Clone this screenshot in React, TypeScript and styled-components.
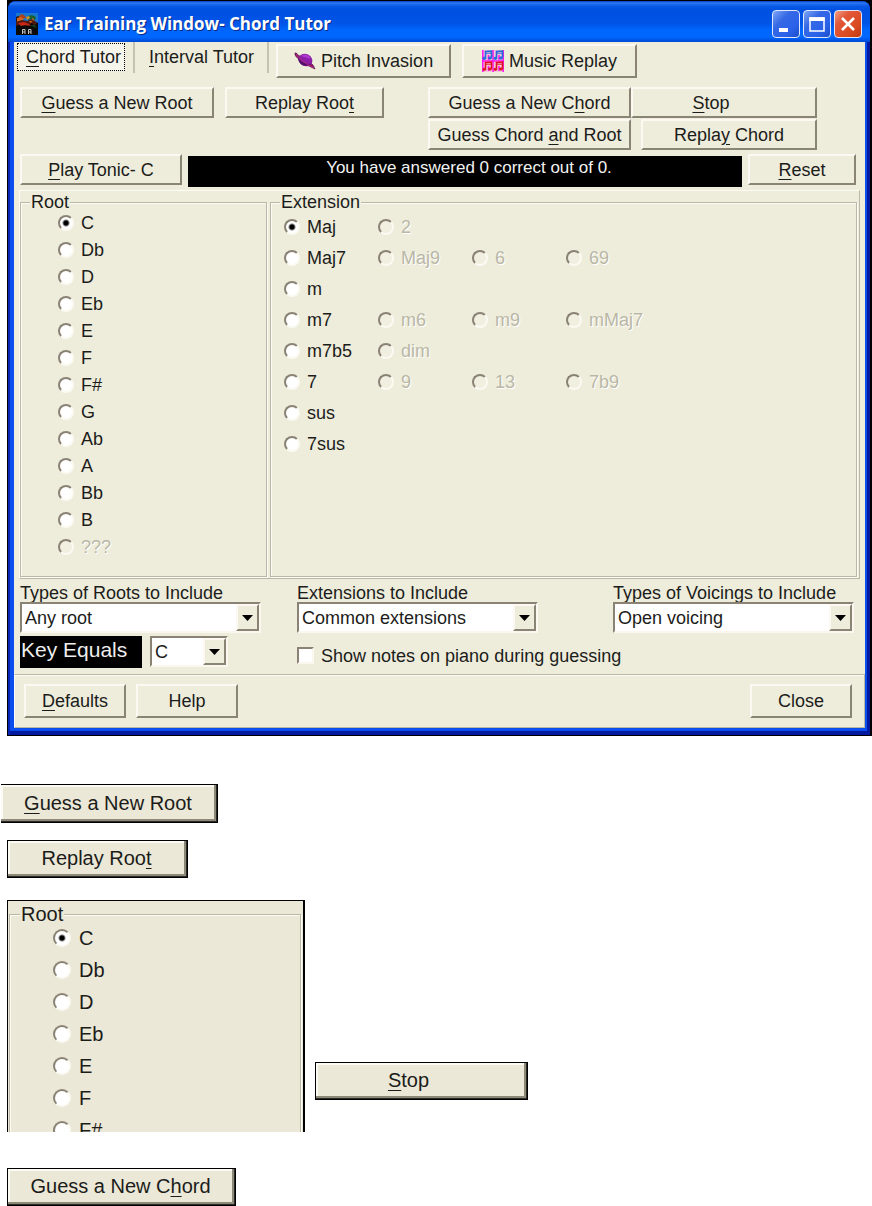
import React from 'react';
import styled, { createGlobalStyle, css } from 'styled-components';

const GlobalStyle = createGlobalStyle`
  *, *::before, *::after { box-sizing: border-box; }
  body {
    margin: 0;
    background: #fff;
    color: #1c1c1a;
    font-family: 'Liberation Sans', Arial, sans-serif;
    font-size: 18px;
    line-height: 20px;
  }
  button, select, input { font: inherit; color: inherit; margin: 0; }
  u { text-decoration-thickness: 1px; text-underline-offset: 3px; }
`;

const Page = styled.main`
  min-width: 860px;
`;

const Frame = styled.section`
  margin-left: 7px;
  padding: 1px 2px 1px 1px;
  background: #000;
`;

const FrameInner = styled.div`
  padding: 0 5px 7px 6px;
  border-radius: 8px 8px 0 0;
  background: #0a4fee;
  box-shadow: inset 2px 0 #0a26b4, inset -3px 0 #0219a0, inset 0 -4px #0219a0;
`;

const TitleBar = styled.header`
  display: flex;
  align-items: center;
  gap: 3px;
  height: 41px;
  margin: 0 -5px 0 -6px;
  padding: 4px 8px 0 8px;
  border-radius: 8px 8px 0 0;
  background: linear-gradient(#0a3fc4 0, #2a78f4 2px, #0a5ae6 5px, #0050e2 9px, #0054e6 22px, #0066fc 29px, #0068ff 36px, #0048d4 41px);
`;

const Title = styled.h1`
  flex: 1;
  margin: 0 0 0 3px;
  color: #fff;
  font: 700 17px/24px 'Open Sans', 'Noto Sans', sans-serif;
  text-shadow: 1px 1px #0a2a86;
  white-space: nowrap;
`;

const CaptionButton = styled.button<{ $close?: boolean }>`
  display: grid;
  place-items: center;
  width: 28px;
  height: 28px;
  padding: 0;
  border: 1px solid #dfe8fb;
  border-radius: 4px;
  background: ${(p) =>
    p.$close
      ? 'linear-gradient(135deg, #f0a088 0, #e2583a 30%, #da4a20 70%, #c03a10 100%)'
      : 'linear-gradient(135deg, #7fa6f6 0, #3568e4 35%, #2a62ea 70%, #1c4ec8 100%)'};
`;

const Client = styled.div`
  background: #eeeddc;
`;

const raised = css`
  border: 2px solid;
  border-color: #fdf9f2 #8a8475 #8a8475 #fdf9f2;
  background: #eeeddc;
`;

const Button = styled.button<{ $w: number; $h?: number; $shift?: boolean }>`
  ${raised}
  display: flex;
  align-items: center;
  justify-content: center;
  gap: 5px;
  width: ${(p) => p.$w}px;
  height: ${(p) => p.$h ?? 31}px;
  padding: 0 ${(p) => (p.$shift ? 26 : 0)}px 0 0;
  white-space: nowrap;
`;

const TabRow = styled.nav`
  display: flex;
  align-items: flex-start;
  height: 36px;
`;

const Tab = styled.button<{ $active?: boolean }>`
  height: 31px;
  padding: 0 13px 1px 14px;
  border: 0;
  border-right: 2px solid #c4c2b0;
  background: transparent;
  white-space: nowrap;
  ${(p) =>
    p.$active &&
    css`
      padding: 1px 8px 2px 3px;
      > span {
        display: block;
        height: 28px;
        padding: 0 3px 0 8px;
        line-height: 26px;
        border: 1px dotted #000;
        background: #f6f5ec;
      }
    `}
`;

const ToolButtons = styled.div`
  display: flex;
  gap: 11px;
  padding: 2px 0 0 7px;
`;

const Commands = styled.div`
  display: flex;
  align-items: flex-start;
  gap: 11px;
  padding: 9px 6px 4px 6px;
`;

const ChordCommands = styled.div`
  display: grid;
  grid-template-columns: 203px 186px;
  gap: 1px 0;
  margin-left: 33px;
  > :last-child { justify-self: end; }
`;

const StatusRow = styled.div`
  display: flex;
  gap: 6px;
  padding: 0 9px 0 6px;
`;

const Status = styled.output`
  flex: 1;
  height: 31px;
  margin-top: 2px;
  padding: 2px 0 0 8px;
  background: #000;
  color: #f2f2f2;
  font-size: 17px;
  text-align: center;
`;

const Panel = styled.div`
  display: flex;
  gap: 3px;
  margin: 3px 5px 0;
  padding: 4px 2px 1px 0;
  border: 1px solid;
  border-color: #fdfcf4 #b9b7a5 #b9b7a5 #fdfcf4;
  background: #eeeddc;
`;

const Group = styled.fieldset<{ $w?: number }>`
  min-width: 0;
  margin: 0;
  padding: 0 1px 16px;
  border: 1px solid #b9b7a5;
  background: inherit;
  box-shadow: inset 1px 1px #fdfcf4, 1px 1px #fdfcf4;
  ${(p) => (p.$w ? `width: ${p.$w}px;` : 'flex: 1;')}
`;

const Legend = styled.legend`
  margin-left: 8px;
  padding: 0 1px;
  background: inherit;
  line-height: 14px;
`;

const RootList = styled.div<{ $large?: boolean }>`
  display: grid;
  grid-auto-rows: ${(p) => (p.$large ? 32 : 27)}px;
  padding-left: ${(p) => (p.$large ? 42 : 36)}px;
`;

const ExtensionGrid = styled.div`
  display: grid;
  grid-template-columns: repeat(4, 94px);
  grid-auto-rows: 31px;
  padding: 2px 0 0 12px;
`;

const Choice = styled.label<{ $off?: boolean; $col?: number; $large?: boolean }>`
  display: flex;
  align-items: center;
  gap: ${(p) => (p.$large ? 8 : 7)}px;
  white-space: nowrap;
  ${(p) => p.$col && `grid-column: ${p.$col};`}
  ${(p) => p.$off && 'color: #b9b7a6; text-shadow: 1px 1px #fff;'}
`;

const Radio = styled.input<{ $large?: boolean }>`
  appearance: none;
  flex: none;
  width: ${(p) => (p.$large ? 18 : 16)}px;
  height: ${(p) => (p.$large ? 18 : 16)}px;
  border: 2px solid;
  border-color: #8a8274 #fbfaf2 #fbfaf2 #8a8274;
  border-radius: 50%;
  background: #fff;
  &:checked { background: radial-gradient(circle, #000 0 2px, #fff 4px); }
  &:disabled { background: #f1efdf; }
`;

const Settings = styled.div`
  display: grid;
  grid-template-columns: 277px minmax(0, 1fr) 241px;
  padding: 5px 11px 6px 6px;
  row-gap: 3px;
`;

const Field = styled.div`
  width: 241px;
  > label {
    display: block;
    height: 18px;
    line-height: 18px;
    white-space: nowrap;
  }
`;

const SelectBox = styled.div<{ $w: number }>`
  position: relative;
  width: ${(p) => p.$w}px;
  height: 31px;
  border: 2px solid;
  border-color: #8a8274 #fbf7ee #fbf7ee #8a8274;
  background: #fff;
  select {
    appearance: none;
    width: 100%;
    height: 100%;
    padding: 0 26px 0 3px;
    border: 0;
    background: transparent;
  }
`;

const DropArrow = styled.span`
  ${raised}
  position: absolute;
  top: 0;
  right: 0;
  bottom: 0;
  display: grid;
  place-items: center;
  width: 23px;
  pointer-events: none;
`;

const KeyRow = styled.div`
  display: flex;
  gap: 8px;
`;

const KeyLabel = styled.label`
  width: 122px;
  height: 32px;
  padding: 2px 0 0 1px;
  background: #000;
  color: #eee;
  font-size: 21px;
  line-height: 24px;
`;

const CheckLabel = styled.label`
  grid-column: 2 / 4;
  display: flex;
  align-items: center;
  gap: 7px;
  padding-top: 7px;
`;

const Check = styled.input`
  appearance: none;
  width: 17px;
  height: 17px;
  border: 2px solid;
  border-color: #8a8274 #fbf7ee #fbf7ee #8a8274;
  background: #fff;
`;

const Footer = styled.footer`
  display: flex;
  gap: 10px;
  padding: 9px 12px 9px 9px;
  border: 1px solid #b9b7a5;
  border-left-color: #fdfcf4;
  box-shadow: inset 0 1px #fdfcf4;
  > :last-child { margin-left: auto; }
`;

const Samples = styled.section`
  display: flex;
  flex-direction: column;
  align-items: flex-start;
  padding: 48px 0 0 7px;
  font-size: 20px;
`;

const SampleButton = styled.button<{ $w: number; $cut?: boolean; $shift?: boolean }>`
  width: ${(p) => p.$w}px;
  height: ${(p) => (p.$cut ? 39 : 38)}px;
  margin-left: ${(p) => (p.$cut ? -6 : 0)}px;
  padding: 0 ${(p) => (p.$shift ? 26 : 2)}px 2px 0;
  border: 1px solid #000;
  border-left-width: ${(p) => (p.$cut ? 0 : 1)}px;
  background: #ebe8d7;
  box-shadow: inset -1px -1px #2c2a24, inset -3px -3px #8c8979, inset 2px 2px #fcfbf3;
  white-space: nowrap;
`;

const SampleRow = styled.div`
  display: flex;
  align-items: flex-end;
  gap: 10px;
  margin: 22px 0 36px;
`;

const SamplePanel = styled.div`
  width: 298px;
  height: 232px;
  padding: 5px 2px 0 1px;
  overflow: hidden;
  border: 1px solid #000;
  border-right-width: 2px;
  border-bottom: 0;
  background: #ebe8d7;
  ${Group} { width: 100%; }
  ${Legend} { margin-left: 9px; line-height: 16px; }
`;

const Space = styled.div<{ $h: number }>`
  height: ${(p) => p.$h}px;
`;

const roots = ['C', 'Db', 'D', 'Eb', 'E', 'F', 'F#', 'G', 'Ab', 'A', 'Bb', 'B', '???'];

const extensions: string[][] = [
  ['Maj', '2'],
  ['Maj7', 'Maj9', '6', '69'],
  ['m'],
  ['m7', 'm6', 'm9', 'mMaj7'],
  ['m7b5', 'dim'],
  ['7', '9', '13', '7b9'],
  ['sus'],
  ['7sus'],
];

const AppIcon = () => (
  <svg width="22" height="22" viewBox="0 0 22 22" aria-hidden="true">
    <rect width="22" height="22" fill="#0c0b0c" />
    <path d="M0 0h22v10l-4-2-5 3-6-1-7 2z" fill="#1878d0" />
    <path d="M0 4l2-1 2 1v4l-4 3z" fill="#241612" />
    <path d="M3 3l3-2 3 2 1 2-4 1-3 1z" fill="#b0401c" />
    <path d="M1 5l4-1 3 2-3 2-4 1z" fill="#d8641c" />
    <path d="M12 3l4-1 4 2-1 3-4-1-3 1z" fill="#1c6030" />
    <path d="M10 4l3-1 1 2-3 2z" fill="#c89028" />
    <path d="M0 9l6-2 5 1 5-2 3 2 2 3-3 1-2-2-5 3-6-2-5 2z" fill="#54180f" />
    <path d="M2 10l6-1 5 2 2 2-5-1-5 1z" fill="#c82818" />
    <path d="M16 5l2 1-1 2zM13 8l3 0-1 2z" fill="#e0701c" />
    <path d="M14 12h5l2 3-3-1z" fill="#16401e" />
    <path d="M6.500 21v-4.500h2.500V21M12.500 21v-4.500H15V21M6.500 19h2.500M12.500 19H15" fill="none" stroke="#c4c4c4" strokeWidth="1" />
  </svg>
);

const PlanetIcon = () => (
  <svg width="22" height="18" viewBox="0 0 22 18" aria-hidden="true">
    <path d="M1 1q-1 3 6 8t14 8q-1-4-5-7L4 3Q2 0 1 1z" fill="#8c1a66" stroke="#5c1450" strokeWidth=".7" />
    <ellipse cx="11.500" cy="8" rx="7" ry="6" transform="rotate(25 11.500 8)" fill="#8c1ea8" />
    <path d="M7 4q4-3 8 0l2 3q-4-1-10-3z" fill="#b03ace" />
    <path d="M4 6q5 6 13 6-5 3-9 1-4-3-4-7z" fill="#541068" />
    <path d="M2 2q4 7 18 14" fill="none" stroke="#b0287c" strokeWidth="1" />
  </svg>
);

const NotePair = ({ x, y, color }: { x: number; y: number; color: string }) => (
  <g transform={`translate(${x} ${y})`} fill={color} stroke={color}>
    <path d="M3.5 8V1.5l6-.5v6.5" fill="none" strokeWidth="1.6" />
    <path d="M3 3.2h6" strokeWidth="1" />
    <ellipse cx="2.4" cy="8.3" rx="1.5" ry="1.1" />
    <ellipse cx="8" cy="8" rx="1.5" ry="1.1" />
  </g>
);

const MusicIcon = () => (
  <svg width="22" height="22" viewBox="0 0 22 22" aria-hidden="true">
    <rect width="22" height="22" fill="#f4c4dc" />
    <path d="M.8 0v22M11 0v22M21.2 0v22M0 11h22M6.5 5v5M17 5v5M6.5 16v5M17 16v5" stroke="#ff10f0" strokeWidth="1.500" />
    <NotePair x={0} y={0} color="#2468d8" />
    <NotePair x={11} y={0} color="#2468d8" />
    <NotePair x={0} y={11} color="#e01420" />
    <NotePair x={11} y={11} color="#e01420" />
  </svg>
);

const Dropdown = ({ id, value, w = 241 }: { id: string; value: string; w?: number }) => (
  <SelectBox $w={w}>
    <select id={id} defaultValue={value}>
      <option>{value}</option>
    </select>
    <DropArrow>
      <svg width="11" height="6" viewBox="0 0 11 6" aria-hidden="true">
        <path d="M0 0h11L5.5 6z" fill="#000" />
      </svg>
    </DropArrow>
  </SelectBox>
);

const RootChoices = ({ name, items, large }: { name: string; items: string[]; large?: boolean }) => (
  <RootList $large={large}>
    {items.map((root) => (
      <Choice key={root} $off={root === '???'} $large={large}>
        <Radio type="radio" name={name} $large={large} defaultChecked={root === 'C'} disabled={root === '???'} />
        {root}
      </Choice>
    ))}
  </RootList>
);

export default function App() {
  return (
    <Page>
      <GlobalStyle />
      <Frame>
        <FrameInner>
          <TitleBar>
            <AppIcon />
            <Title>Ear Training Window- Chord Tutor</Title>
            <CaptionButton aria-label="Minimize">
              <svg width="20" height="20" viewBox="0 0 20 20"><path d="M3 14h9v4H3z" fill="#fff" /></svg>
            </CaptionButton>
            <CaptionButton aria-label="Maximize">
              <svg width="20" height="20" viewBox="0 0 20 20">
                <path d="M3 4h14v13H3z" fill="none" stroke="#fff" strokeWidth="1.5" />
                <path d="M2.300 3.300h15.400v3.700H2.300z" fill="#fff" />
              </svg>
            </CaptionButton>
            <CaptionButton $close aria-label="Close window">
              <svg width="20" height="20" viewBox="0 0 20 20">
                <path d="M4 4l12 12M16 4L4 16" stroke="#fff" strokeWidth="2.600" />
              </svg>
            </CaptionButton>
          </TitleBar>
          <Client>
            <TabRow>
              <Tab $active><span><u>C</u>hord Tutor</span></Tab>
              <Tab><u>I</u>nterval Tutor</Tab>
              <ToolButtons>
                <Button $w={175} $h={34}><PlanetIcon />Pitch Invasion</Button>
                <Button $w={175} $h={34}><MusicIcon />Music Replay</Button>
              </ToolButtons>
            </TabRow>
            <Commands>
              <Button $w={194}><span><u>G</u>uess a New Root</span></Button>
              <Button $w={159}><span>Replay Roo<u>t</u></span></Button>
              <ChordCommands>
                <Button $w={203}><span>Guess a New C<u>h</u>ord</span></Button>
                <Button $w={186} $shift><span><u>S</u>top</span></Button>
                <Button $w={203}><span>Guess Chord <u>a</u>nd Root</span></Button>
                <Button $w={176}><span>Repla<u>y</u> Chord</span></Button>
              </ChordCommands>
            </Commands>
            <StatusRow>
              <Button $w={162}><span><u>P</u>lay Tonic- C</span></Button>
              <Status>You have answered 0 correct out of 0.</Status>
              <Button $w={108}><span><u>R</u>eset</span></Button>
            </StatusRow>
            <Panel>
              <Group $w={247}>
                <Legend>Root</Legend>
                <RootChoices name="root" items={roots} />
              </Group>
              <Group>
                <Legend>Extension</Legend>
                <ExtensionGrid>
                  {extensions.map((row) =>
                    row.map((label, i) => (
                      <Choice key={label} $col={i + 1} $off={i > 0}>
                        <Radio type="radio" name="extension" defaultChecked={label === 'Maj'} disabled={i > 0} />
                        {label}
                      </Choice>
                    )),
                  )}
                </ExtensionGrid>
              </Group>
            </Panel>
            <Settings>
              <Field>
                <label htmlFor="roots">Types of Roots to Include</label>
                <Dropdown id="roots" value="Any root" />
              </Field>
              <Field>
                <label htmlFor="extensions">Extensions to Include</label>
                <Dropdown id="extensions" value="Common extensions" />
              </Field>
              <Field>
                <label htmlFor="voicings">Types of Voicings to Include</label>
                <Dropdown id="voicings" value="Open voicing" />
              </Field>
              <KeyRow>
                <KeyLabel htmlFor="key">Key Equals</KeyLabel>
                <Dropdown id="key" value="C" w={78} />
              </KeyRow>
              <CheckLabel>
                <Check type="checkbox" />
                Show notes on piano during guessing
              </CheckLabel>
            </Settings>
            <Footer>
              <Button $w={102} $h={34}><span><u>D</u>efaults</span></Button>
              <Button $w={102} $h={34}>Help</Button>
              <Button $w={102} $h={34}>Close</Button>
            </Footer>
          </Client>
        </FrameInner>
      </Frame>
      <Samples>
        <SampleButton $w={217} $cut><u>G</u>uess a New Root</SampleButton>
        <Space $h={17} />
        <SampleButton $w={181}>Replay Roo<u>t</u></SampleButton>
        <SampleRow>
          <SamplePanel>
            <Group>
              <Legend>Root</Legend>
              <RootChoices name="sample-root" items={roots.slice(0, 7)} large />
            </Group>
          </SamplePanel>
          <div>
            <SampleButton $w={213} $shift><u>S</u>top</SampleButton>
            <Space $h={32} />
          </div>
        </SampleRow>
        <SampleButton $w={229}>Guess a New C<u>h</u>ord</SampleButton>
      </Samples>
    </Page>
  );
}
